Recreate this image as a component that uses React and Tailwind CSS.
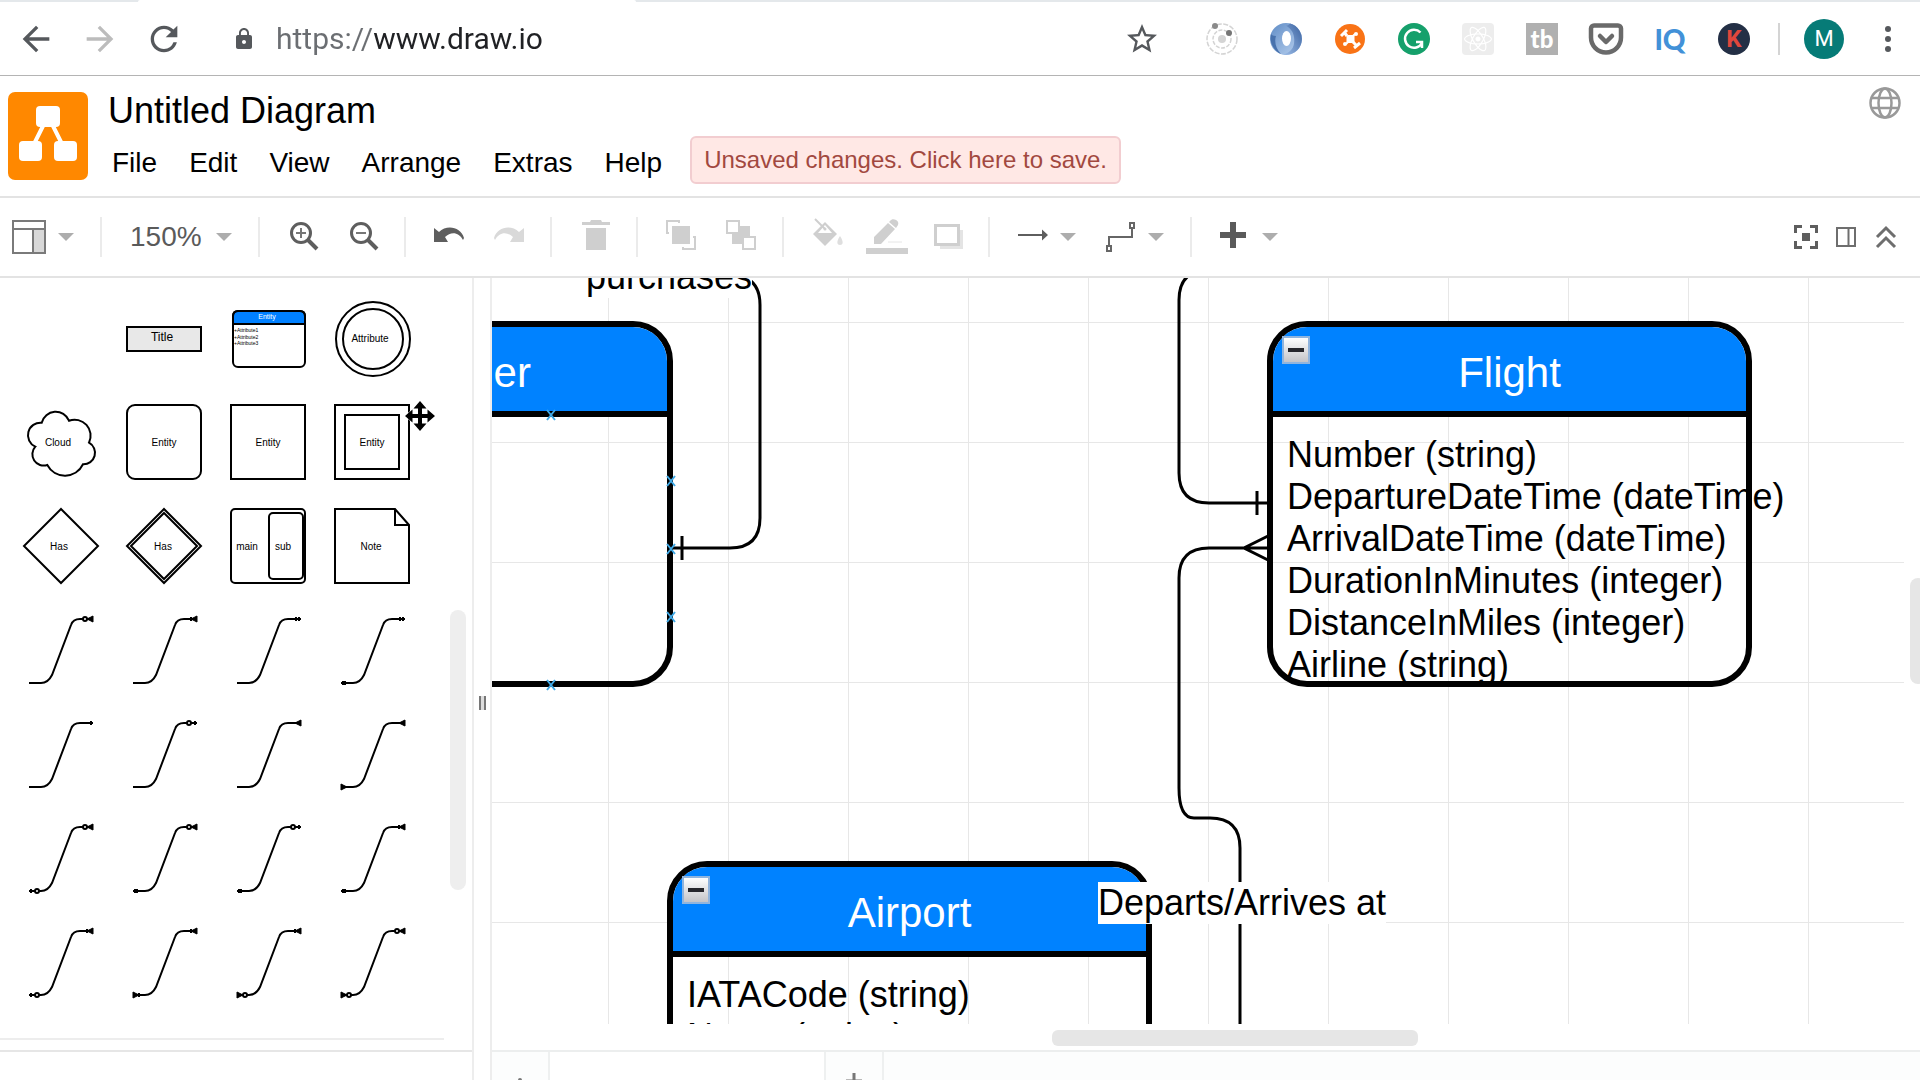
import React from "react";
import { MdArrowBack, MdArrowForward, MdRefresh, MdLock, MdStarBorder } from "react-icons/md";
import { FaReact } from "react-icons/fa";
import { Pocket } from "lucide-react";

/* ---------- browser bar ---------- */

function OrbitIcon() {
  return (
    <svg viewBox="0 0 32 32" className="size-8" fill="none">
      <circle cx="16" cy="16" r="15" stroke="#d4d4d4" strokeWidth="1.5" strokeDasharray="5 1.5" />
      <circle cx="16" cy="16" r="9" stroke="#d4d4d4" strokeWidth="1.5" strokeDasharray="4 1.5" />
      <circle cx="16" cy="16" r="4" fill="#d4d4d4" />
      <circle cx="9" cy="3" r="3" fill="#8a8a8a" />
      <circle cx="23" cy="10" r="3" fill="#757575" />
    </svg>
  );
}

function SwirlIcon() {
  return (
    <svg viewBox="0 0 32 32" className="size-8">
      <defs>
        <linearGradient id="swirlA" x1="0" y1="0" x2="1" y2="1">
          <stop offset="0" stopColor="#5f8cc6" />
          <stop offset="1" stopColor="#bcd3f0" />
        </linearGradient>
        <linearGradient id="swirlB" x1="1" y1="0" x2="0" y2="1">
          <stop offset="0" stopColor="#3a62a0" />
          <stop offset="1" stopColor="#9dbde8" />
        </linearGradient>
      </defs>
      <circle cx="16" cy="16" r="16" fill="url(#swirlA)" />
      <path d="M20 .5A16 16 0 0 1 13 31.700c6-2 10-5 11-11 1-8-1-14-8-18 2 0 3-1 4-2.200Z" fill="url(#swirlB)" />
      <path d="M1 11C-1 20 4 28 11 31 6 26 4 19 6 13 3 13 2 12 1 11Z" fill="#4872ad" />
      <ellipse cx="16.500" cy="15.500" rx="4.500" ry="7.500" fill="#fff" />
    </svg>
  );
}

function OrangeIcon() {
  return (
    <svg viewBox="0 0 32 32" className="size-8">
      <circle cx="16" cy="16" r="15" fill="#f97316" />
      <rect x="12.500" y="12" width="8" height="8" rx="1.500" fill="#fff" />
      <path d="M7 13l6-6M10 9l3 4M20 25l6-5M22 22l-3-3" stroke="#fff" strokeWidth="3" fill="none" />
      <path d="M12 21l2-2M21 11l-2 2" stroke="#fff" strokeWidth="2" />
      <circle cx="11" cy="21" r="2" fill="#fff" />
      <circle cx="22" cy="11" r="2" fill="#fff" />
    </svg>
  );
}

function GreenIcon() {
  return (
    <svg viewBox="0 0 32 32" className="size-8" fill="none">
      <circle cx="16" cy="16" r="16" fill="#15a06b" />
      <path d="M22.500 9.500A9 9 0 1 0 24 20M18 19h6v6" stroke="#fff" strokeWidth="2.500" />
    </svg>
  );
}

function BrowserBar() {
  return (
    <header className="shrink-0 border-b border-[#b4b4b4]">
      <div className="flex h-[2px] bg-[#e4e8eb]">
        <div className="ml-[138px] w-[498px] rounded-t bg-white" />
      </div>
      <div className="flex h-[73px] items-center pl-4 pr-6 text-[#55585c]">
        <div className="flex items-center gap-6">
          <button aria-label="Back"><MdArrowBack size={40} /></button>
          <button aria-label="Forward" className="text-[#bcbcbc]"><MdArrowForward size={40} /></button>
          <button aria-label="Reload"><MdRefresh size={40} /></button>
        </div>
        <MdLock size={24} className="ml-12 shrink-0" />
        <input
          aria-label="Address"
          defaultValue="https://www.draw.io"
          className="ml-5 min-w-0 flex-1 bg-[linear-gradient(90deg,#6b6e72_98px,#202124_98px)] bg-clip-text font-[Roboto,sans-serif] text-[30px] leading-9 text-transparent outline-none"
        />
        <button aria-label="Bookmark" className="mr-[46px]"><MdStarBorder size={36} /></button>
        <div className="flex items-center gap-8">
          <button aria-label="Orbit extension"><OrbitIcon /></button>
          <button aria-label="Swirl extension"><SwirlIcon /></button>
          <button aria-label="Drone extension"><OrangeIcon /></button>
          <button aria-label="Grammar extension"><GreenIcon /></button>
          <button aria-label="React extension" className="grid size-8 place-items-center rounded-sm bg-[#ededed] text-white">
            <FaReact size={28} />
          </button>
          <button aria-label="Video extension" className="grid size-8 place-items-center bg-[#b0b0b0] font-[Lato,sans-serif] text-2xl leading-8 font-black text-white">
            tb
          </button>
          <button aria-label="Pocket" className="text-[#6a6a6a]"><Pocket size={36} strokeWidth={3} className="-mx-0.5" /></button>
          <button className="w-8 text-center font-[Lato,sans-serif] text-[28px] leading-8 font-black text-[#4291d8]">IQ</button>
          <button className="grid size-8 place-items-center rounded-full bg-[#232f45] font-[Roboto,sans-serif] text-2xl leading-8 font-bold text-[#e0473c]">K</button>
        </div>
        <div className="mr-6 ml-7 h-8 w-[2px] bg-[#d4d4d4]" />
        <button className="grid size-10 place-items-center rounded-full bg-[#067b77] font-[Roboto,sans-serif] text-[22px] text-white">M</button>
        <button aria-label="Browser menu" className="ml-9">
          <svg viewBox="0 0 16 32" className="h-8 w-4" fill="#55585c">
            <circle cx="8" cy="6" r="3" />
            <circle cx="8" cy="16" r="3" />
            <circle cx="8" cy="26" r="3" />
          </svg>
        </button>
      </div>
    </header>
  );
}

/* ---------- title and menus ---------- */

const MENUS = ["File", "Edit", "View", "Arrange", "Extras", "Help"];

function TitleBar() {
  return (
    <div className="flex h-[122px] shrink-0 items-start border-b-2 border-[#e3e3e3] pr-[19px] pl-2">
      <svg viewBox="0 0 80 88" className="mt-4 h-[88px] w-20 shrink-0">
        <rect width="80" height="88" rx="7" fill="#ff8800" />
        <path d="M37 30L24 56M43 30l13 26" stroke="#fff" strokeWidth="4" />
        <rect x="28" y="14" width="24" height="21" rx="4" fill="#fff" />
        <rect x="11" y="49" width="23" height="20" rx="4" fill="#fff" />
        <rect x="46" y="49" width="23" height="20" rx="4" fill="#fff" />
      </svg>
      <div className="ml-5 flex flex-col items-start pt-3.5">
        <button className="text-4xl leading-[42px]">Untitled Diagram</button>
        <div className="mt-1 flex h-12 items-center">
          <nav className="flex gap-8 pt-1.5 pl-1 text-[28px] leading-8">
            {MENUS.map((m) => (
              <button key={m}>{m}</button>
            ))}
          </nav>
          <button className="ml-7 h-12 rounded-md border-2 border-[#f2cdd0] bg-[#ffe8e5] px-3 text-2xl leading-7 text-[#a2483f]">
            Unsaved changes. Click here to save.
          </button>
        </div>
      </div>
      <button aria-label="Language" className="mt-[11px] ml-auto">
        <svg viewBox="0 0 32 32" className="size-8" fill="none" stroke="#999" strokeWidth="2.500">
          <circle cx="16" cy="16" r="14.500" />
          <ellipse cx="16" cy="16" rx="6.500" ry="14.500" />
          <path d="M3 11h26M3 21h26" />
        </svg>
      </button>
    </div>
  );
}

/* ---------- toolbar ---------- */

function Caret() {
  return (
    <svg viewBox="0 0 16 8" className="h-2 w-4" fill="#adadad">
      <path d="M0 0h16L8 8z" />
    </svg>
  );
}

function Tool({ label, children }) {
  return (
    <button aria-label={label}>
      <svg viewBox="0 0 32 32" className="size-8 overflow-visible" fill="none">
        {children}
      </svg>
    </button>
  );
}

function Group({ children }) {
  return <div className="flex h-10 items-center gap-7 border-l-2 border-[#ebebeb] pr-6 pl-7">{children}</div>;
}

function Toolbar() {
  return (
    <div className="flex h-20 shrink-0 items-center border-b-2 border-[#e3e3e3] pr-[22px] pl-[11px] text-[#5a5a5a]">
      <button aria-label="Layout" className="mr-[26px] flex items-center gap-[11px]">
        <svg viewBox="0 0 36 36" className="size-9" fill="none" stroke="#7a7a7a" strokeWidth="2">
          <rect x="22" y="10" width="12" height="24" fill="#d8d8d8" />
          <rect x="2" y="2" width="32" height="32" />
          <path d="M2 10h32" />
        </svg>
        <Caret />
      </button>
      <div className="flex h-10 items-center border-l-2 border-[#ebebeb] pr-[26px] pl-7">
        <button className="flex items-center gap-3.5 text-[28px] leading-8">
          150%
          <Caret />
        </button>
      </div>
      <Group>
        <Tool label="Zoom in">
          <circle cx="13" cy="12" r="9.500" stroke="#5e5e5e" strokeWidth="3" />
          <path d="M20 19l9 9" stroke="#5e5e5e" strokeWidth="4" />
          <path d="M8 12h10M13 7v10" stroke="#777" strokeWidth="2" />
        </Tool>
        <Tool label="Zoom out">
          <circle cx="13" cy="12" r="9.500" stroke="#5e5e5e" strokeWidth="3" />
          <path d="M20 19l9 9" stroke="#5e5e5e" strokeWidth="4" />
          <path d="M8 12h10" stroke="#777" strokeWidth="2" />
        </Tool>
      </Group>
      <Group>
        <Tool label="Undo">
          <path d="M0 7l5 4C13 3 27 6 30 17l-1 2C25 11 17 10 11 16l3 5H0z" fill="#5e5e5e" />
        </Tool>
        <Tool label="Redo">
          <path d="M30 7l-5 4C17 3 3 6 0 17l1 2C5 11 13 10 19 16l-3 5h14z" fill="#d9d9d9" />
        </Tool>
      </Group>
      <Group>
        <Tool label="Delete">
          <path d="M2 1h8l1-2h10l1 2h8v3H2zM6 7h20v22H6z" fill="#cfcfcf" />
        </Tool>
      </Group>
      <Group>
        <Tool label="To front">
          <rect x="6" y="5" width="18" height="18" fill="#cfcfcf" />
          <path d="M13 2V0H1v12h2M27 16h2v12H17v-2" stroke="#cfcfcf" strokeWidth="2" />
        </Tool>
        <Tool label="To back">
          <rect x="6" y="5" width="18" height="18" fill="#cfcfcf" />
          <rect x="1" y="0" width="12" height="12" fill="#fff" stroke="#cfcfcf" strokeWidth="2" />
          <rect x="17" y="16" width="12" height="12" fill="#fff" stroke="#cfcfcf" strokeWidth="2" />
        </Tool>
      </Group>
      <Group>
        <Tool label="Fill colour">
          <path d="M13 1L1 13l12 12 12-12z" fill="#cfcfcf" />
          <path d="M13 4l7 8H6z" fill="#fff" />
          <path d="M3-2l10 10" stroke="#cfcfcf" strokeWidth="2" />
          <circle cx="13" cy="8" r="1.500" fill="#cfcfcf" />
          <path d="M28 15c-4 6-3 9 0 9s4-3 0-9z" fill="#dedede" />
        </Tool>
        <Tool label="Line colour">
          <path d="M2 23v-7L16 2l7 6L9 23zM18 0c3-4 10 0 8 4l-2 3-7-6z" fill="#cfcfcf" />
          <path d="M16 21h14" stroke="#e6e6e6" />
          <rect x="-6" y="27" width="42" height="6" fill="#cfcfcf" />
        </Tool>
        <Tool label="Shadow">
          <rect x="8" y="9" width="23" height="19" fill="#e4e4e4" />
          <rect x="3.500" y="4.500" width="23" height="19" fill="#fff" stroke="#cfcfcf" strokeWidth="3" />
        </Tool>
      </Group>
      <div className="flex h-10 items-center gap-[30px] border-l-2 border-[#ebebeb] pr-[26px] pl-7">
        <button aria-label="Connection" className="flex items-center gap-2.5">
          <svg viewBox="0 0 32 32" className="size-8">
            <path d="M0 13h24V8.500l6 5.500-6 5.500V15H0z" fill="#5e5e5e" />
          </svg>
          <Caret />
        </button>
        <button aria-label="Waypoints" className="flex items-center gap-2.5">
          <svg viewBox="0 0 32 32" className="size-8" fill="none" stroke="#666" strokeWidth="2">
            <path d="M3 25v-9h23V7" />
            <rect x="1" y="25" width="4" height="5" />
            <rect x="24" y="2" width="4" height="5" />
          </svg>
          <Caret />
        </button>
      </div>
      <div className="flex h-10 items-center border-l-2 border-[#ebebeb] pl-7">
        <button aria-label="Insert" className="flex items-center gap-2.5">
          <svg viewBox="0 0 32 32" className="size-8" fill="#5a5a5a">
            <path d="M10 1h6v10h10v6H16v10h-6V17H0v-6h10z" />
          </svg>
          <Caret />
        </button>
      </div>
      <div className="ml-auto flex items-center gap-4">
        <button aria-label="Fullscreen">
          <svg viewBox="0 0 24 24" className="size-6" fill="none" stroke="#5e5e5e" strokeWidth="3">
            <path d="M1.500 8V1.500H8M16 1.500h6.500V8M22.500 16v6.500H16M8 22.500H1.500V16" />
            <rect x="8" y="8" width="8" height="8" fill="#5e5e5e" stroke="none" />
          </svg>
        </button>
        <button aria-label="Format panel">
          <svg viewBox="0 0 24 24" className="size-6" fill="none" stroke="#6e6e6e" strokeWidth="2">
            <rect x="3" y="3" width="18" height="18" />
            <path d="M14.500 3v18" />
          </svg>
        </button>
        <button aria-label="Collapse">
          <svg viewBox="0 0 24 24" className="size-6" fill="none" stroke="#6e6e6e" strokeWidth="3">
            <path d="M3 12l9-9 9 9M3 22l9-9 9 9" />
          </svg>
        </button>
      </div>
    </div>
  );
}

/* ---------- shape palette ---------- */

function Label({ x, children }) {
  return (
    <text x={x} y="55" fontSize="10" textAnchor="middle" fill="#000" stroke="none">
      {children}
    </text>
  );
}

const SHAPES = [
  ["Blank", null],
  [
    "Title",
    <>
      <rect x="14" y="40" width="74" height="24" fill="#e8e8e8" />
      <text x="49" y="54" fontSize="12" textAnchor="middle" fill="#000" stroke="none">Title</text>
    </>,
  ],
  [
    "Entity card",
    <>
      <path d="M16 37V29q0-5 5-5h62q5 0 5 5v8z" fill="#0080ff" />
      <rect x="16" y="24" width="72" height="56" rx="5" />
      <g stroke="none">
        <text x="50" y="32" fontSize="7" textAnchor="middle" fill="#fff">Entity</text>
        <g fontSize="5" fill="#000">
          <text x="17" y="45">+Attribute1</text>
          <text x="17" y="52">+Attribute2</text>
          <text x="17" y="58">+Attribute3</text>
        </g>
      </g>
    </>,
  ],
  [
    "Attribute",
    <>
      <circle cx="52" cy="52" r="37" />
      <circle cx="52" cy="52" r="30" />
      <Label x="49">Attribute</Label>
    </>,
  ],
  [
    "Cloud",
    <>
      <path d="M32.700 31.700A14.400 14.400 0 0 1 60 29.700A16 16 0 0 1 80 51.700A11.500 11.500 0 0 1 74 73.300A20 20 0 0 1 38.300 74A11.300 11.300 0 0 1 26.300 55.700A12.600 12.600 0 0 1 32.700 31.700Z" />
      <Label x="49">Cloud</Label>
    </>,
  ],
  ["Rounded entity", <><rect x="14" y="14" width="74" height="74" rx="8" /><Label x="51">Entity</Label></>],
  ["Entity", <><rect x="14" y="14" width="74" height="74" /><Label x="51">Entity</Label></>],
  [
    "Weak entity",
    <>
      <rect x="14" y="14" width="74" height="74" />
      <rect x="24" y="24" width="54" height="54" />
      <Label x="51">Entity</Label>
    </>,
  ],
  ["Relation", <><path d="M52 14l37 37-37 37-37-37z" /><Label x="50">Has</Label></>],
  [
    "Identifying relation",
    <>
      <path d="M51 14l37 37-37 37-37-37zM51 18l33 33-33 33-33-33z" />
      <Label x="50">Has</Label>
    </>,
  ],
  [
    "Main and sub",
    <>
      <rect x="14" y="14" width="74" height="74" rx="4" />
      <rect x="52" y="18" width="34" height="66" rx="4" />
      <Label x="30">main</Label>
      <Label x="66">sub</Label>
    </>,
  ],
  ["Note", <><path d="M14 14h60l14 16v58H14zM74 14v16h14" /><Label x="50">Note</Label></>],
];

/* Each pair names the symbols at the lower left and upper right end of a link. */
const LINKS = [
  ["none", "optionalMany"], ["none", "oneMany"], ["none", "oneOne"], ["double", "oneOne"],
  ["none", "one"], ["none", "optionalOne"], ["none", "many"], ["many", "many"],
  ["optionalOne", "optionalMany"], ["double", "optionalMany"], ["double", "optionalOne"], ["double", "oneMany"],
  ["optionalOne", "oneMany"], ["oneMany", "oneMany"], ["optionalMany", "oneMany"], ["optionalMany", "optionalMany"],
];

/* Drawn for a line that arrives from the left and ends at x = 0. */
function LinkEnd({ kind }) {
  const many = kind.toLowerCase().includes("many");
  return (
    <g strokeWidth="1">
      {many && <path d="M0-3v6L-6 0z" fill="#000" />}
      {(kind === "one" || kind === "optionalOne" || kind === "oneOne") && <path d="M-2-2v4" strokeWidth="2" />}
      {kind === "oneOne" && <path d="M-5-2v4" strokeWidth="2" />}
      {kind === "oneMany" && <path d="M-6-2v4" strokeWidth="2" />}
      {kind === "double" && <path d="M-3-2v4" strokeWidth="4" />}
      {kind.startsWith("optional") && <circle cx="-8" cy="0" r="2" fill="#fff" strokeWidth="2" />}
    </g>
  );
}

function Palette() {
  return (
    <aside className="flex w-[472px] shrink-0 flex-col">
      <div className="flex min-h-0 flex-1">
        <div className="w-[444px] overflow-hidden">
          <div className="grid w-[425px] grid-cols-4 pt-[9px] pl-[9px]">
            {SHAPES.map(([name, art]) => (
              <button key={name} aria-label={name}>
                <svg viewBox="0 0 104 104" className="size-[104px]" fill="none" stroke="#000" strokeWidth="2">
                  {art}
                </svg>
              </button>
            ))}
            {LINKS.map(([a, b], i) => (
              <button key={i} aria-label={`Link ${i + 1}`}>
                <svg viewBox="0 0 104 104" className="size-[104px]" fill="none" stroke="#000" strokeWidth="2">
                  <path d="M20 84H32Q39 84 43 76L62 26Q64 20 71 20H84" />
                  <g transform="translate(84 20)"><LinkEnd kind={b} /></g>
                  <g transform="translate(20 84) scale(-1 1)"><LinkEnd kind={a} /></g>
                </svg>
              </button>
            ))}
          </div>
          <div className="mt-[23px] h-[2px] bg-[#ededed]" />
        </div>
        <div className="mt-[332px] ml-1.5 h-[280px] w-4 rounded-full bg-[#eee]" />
      </div>
      <div className="h-[30px] shrink-0 border-t-2 border-[#e6e6e6]" />
    </aside>
  );
}

/* ---------- diagram ---------- */

function Entity({ name, fields, className }) {
  return (
    <section className={"absolute h-[366px] w-[485px] rounded-[40px] border-6 border-black " + className}>
      <h2 className="flex h-[90px] items-center justify-center rounded-t-[34px] border-b-6 border-black bg-[#0082ff] pt-2 text-[42px] leading-[48px] text-white">
        {name}
      </h2>
      <button
        aria-label={`Collapse ${name}`}
        className="absolute top-[9px] left-[9px] grid size-7 place-items-center border-2 border-[#8fb4de] bg-linear-to-b from-white to-[#c4c4c8]"
      >
        <span className="h-1 w-4 bg-[#26262c]" />
      </button>
      <ul className="h-[264px] overflow-y-clip pt-[17px] pl-3.5 text-4xl leading-[42px] whitespace-nowrap">
        {fields.map((f) => (
          <li key={f}>{f}</li>
        ))}
      </ul>
    </section>
  );
}

function ConnectPoint({ x, y }) {
  return <path d={`M${x - 4} ${y - 5}l8 10m0-10l-8 10`} stroke="#3fa9e6" strokeWidth="2" />;
}

function Canvas() {
  return (
    <main className="relative mr-4 flex-1 overflow-hidden bg-[linear-gradient(#e7e7e7_1px,transparent_1px),linear-gradient(90deg,#e7e7e7_1px,transparent_1px)] bg-[size:120px_120px] bg-[position:116px_44px]">
      <Entity
        name="Passenger"
        fields={[]}
        className="top-[43px] -left-[304px]"
      />
      <Entity
        name="Flight"
        fields={[
          "Number (string)",
          "DepartureDateTime (dateTime)",
          "ArrivalDateTime (dateTime)",
          "DurationInMinutes (integer)",
          "DistanceInMiles (integer)",
          "Airline (string)",
        ]}
        className="top-[43px] left-[775px]"
      />
      <Entity
        name="Airport"
        fields={["IATACode (string)", "Name (string)"]}
        className="top-[583px] left-[175px]"
      />
      <svg className="pointer-events-none absolute top-0 left-0 h-[746px] w-[1412px]" fill="none" stroke="#000" strokeWidth="3">
        <path d="M181 270H238Q268 270 268 240V27Q268-3 238-3M190 258v24" />
        <path d="M717-8Q687-8 687 22V195Q687 225 717 225H776M765 213v24" />
        <path d="M776 270H717Q687 270 687 300V510Q687 540 702 540H718Q748 540 748 570V746M776 258L752 270L776 282" />
        <ConnectPoint x={59} y={137} />
        <ConnectPoint x={179} y={203} />
        <ConnectPoint x={179} y={271} />
        <ConnectPoint x={179} y={339} />
        <ConnectPoint x={59} y={407} />
      </svg>
      <span className="absolute -top-[22px] left-[94px] bg-white text-4xl leading-[42px]">purchases</span>
      <span className="absolute top-[604px] left-[606px] bg-white text-4xl leading-[42px] whitespace-nowrap">
        Departs/Arrives at
      </span>
    </main>
  );
}

function PageTabs() {
  return (
    <footer className="flex h-[30px] shrink-0 items-start overflow-hidden border-t-2 border-[#eceeee] bg-[#fcfdfd]">
      <button aria-label="Pages" className="flex h-14 w-[58px] items-center justify-center border-r-2 border-[#eef0f0]">
        <svg viewBox="0 0 4 16" className="h-4 w-1" fill="#777">
          <circle cx="2" cy="8" r="2" />
        </svg>
      </button>
      <button aria-label="Current page" className="h-14 w-[276px] border-r-2 border-[#eef0f0] bg-white" />
      <button aria-label="Add page" className="flex h-14 w-[58px] justify-center border-r-2 border-[#eef0f0] pt-[21px]">
        <svg viewBox="0 0 16 16" className="size-4" stroke="#777" strokeWidth="3">
          <path d="M8 0v16M0 8h16" />
        </svg>
      </button>
    </footer>
  );
}

function MoveCursor() {
  return (
    <svg viewBox="0 0 32 32" className="pointer-events-none absolute top-[122px] left-[404px] size-8">
      <path
        d="M16 1l6.500 7.500H18V14h5.500V9.500L31 16l-7.500 6.500V18H18v5.500h4.500L16 31l-6.500-7.500H14V18H8.500v4.500L1 16l7.500-6.500V14H14V8.500H9.500z"
        fill="#000"
        stroke="#fff"
        strokeWidth="1"
        paintOrder="stroke"
      />
    </svg>
  );
}

export default function App() {
  return (
    <div className="flex h-screen flex-col overflow-hidden bg-white font-['Liberation_Sans',Arial,sans-serif] text-black">
      <BrowserBar />
      <TitleBar />
      <Toolbar />
      <div className="relative flex min-h-0 flex-1">
        <Palette />
        <div className="flex w-5 shrink-0 justify-center border-x-2 border-[#ededed]">
          <div className="mt-[418px] h-3.5 w-[7px] border-x-2 border-[#777] bg-[#ddd]" />
        </div>
        <div className="flex min-w-0 flex-1 flex-col">
          <div className="relative flex min-h-0 flex-1">
            <Canvas />
            <div className="absolute top-[300px] -right-1.5 h-[106px] w-4 rounded-lg bg-[#e6e6e6]" />
          </div>
          <div className="flex h-[26px] shrink-0 items-start pt-1.5">
            <div className="ml-[560px] h-4 w-[366px] rounded-md bg-[#e6e6e6]" />
          </div>
          <PageTabs />
        </div>
        <MoveCursor />
      </div>
    </div>
  );
}
